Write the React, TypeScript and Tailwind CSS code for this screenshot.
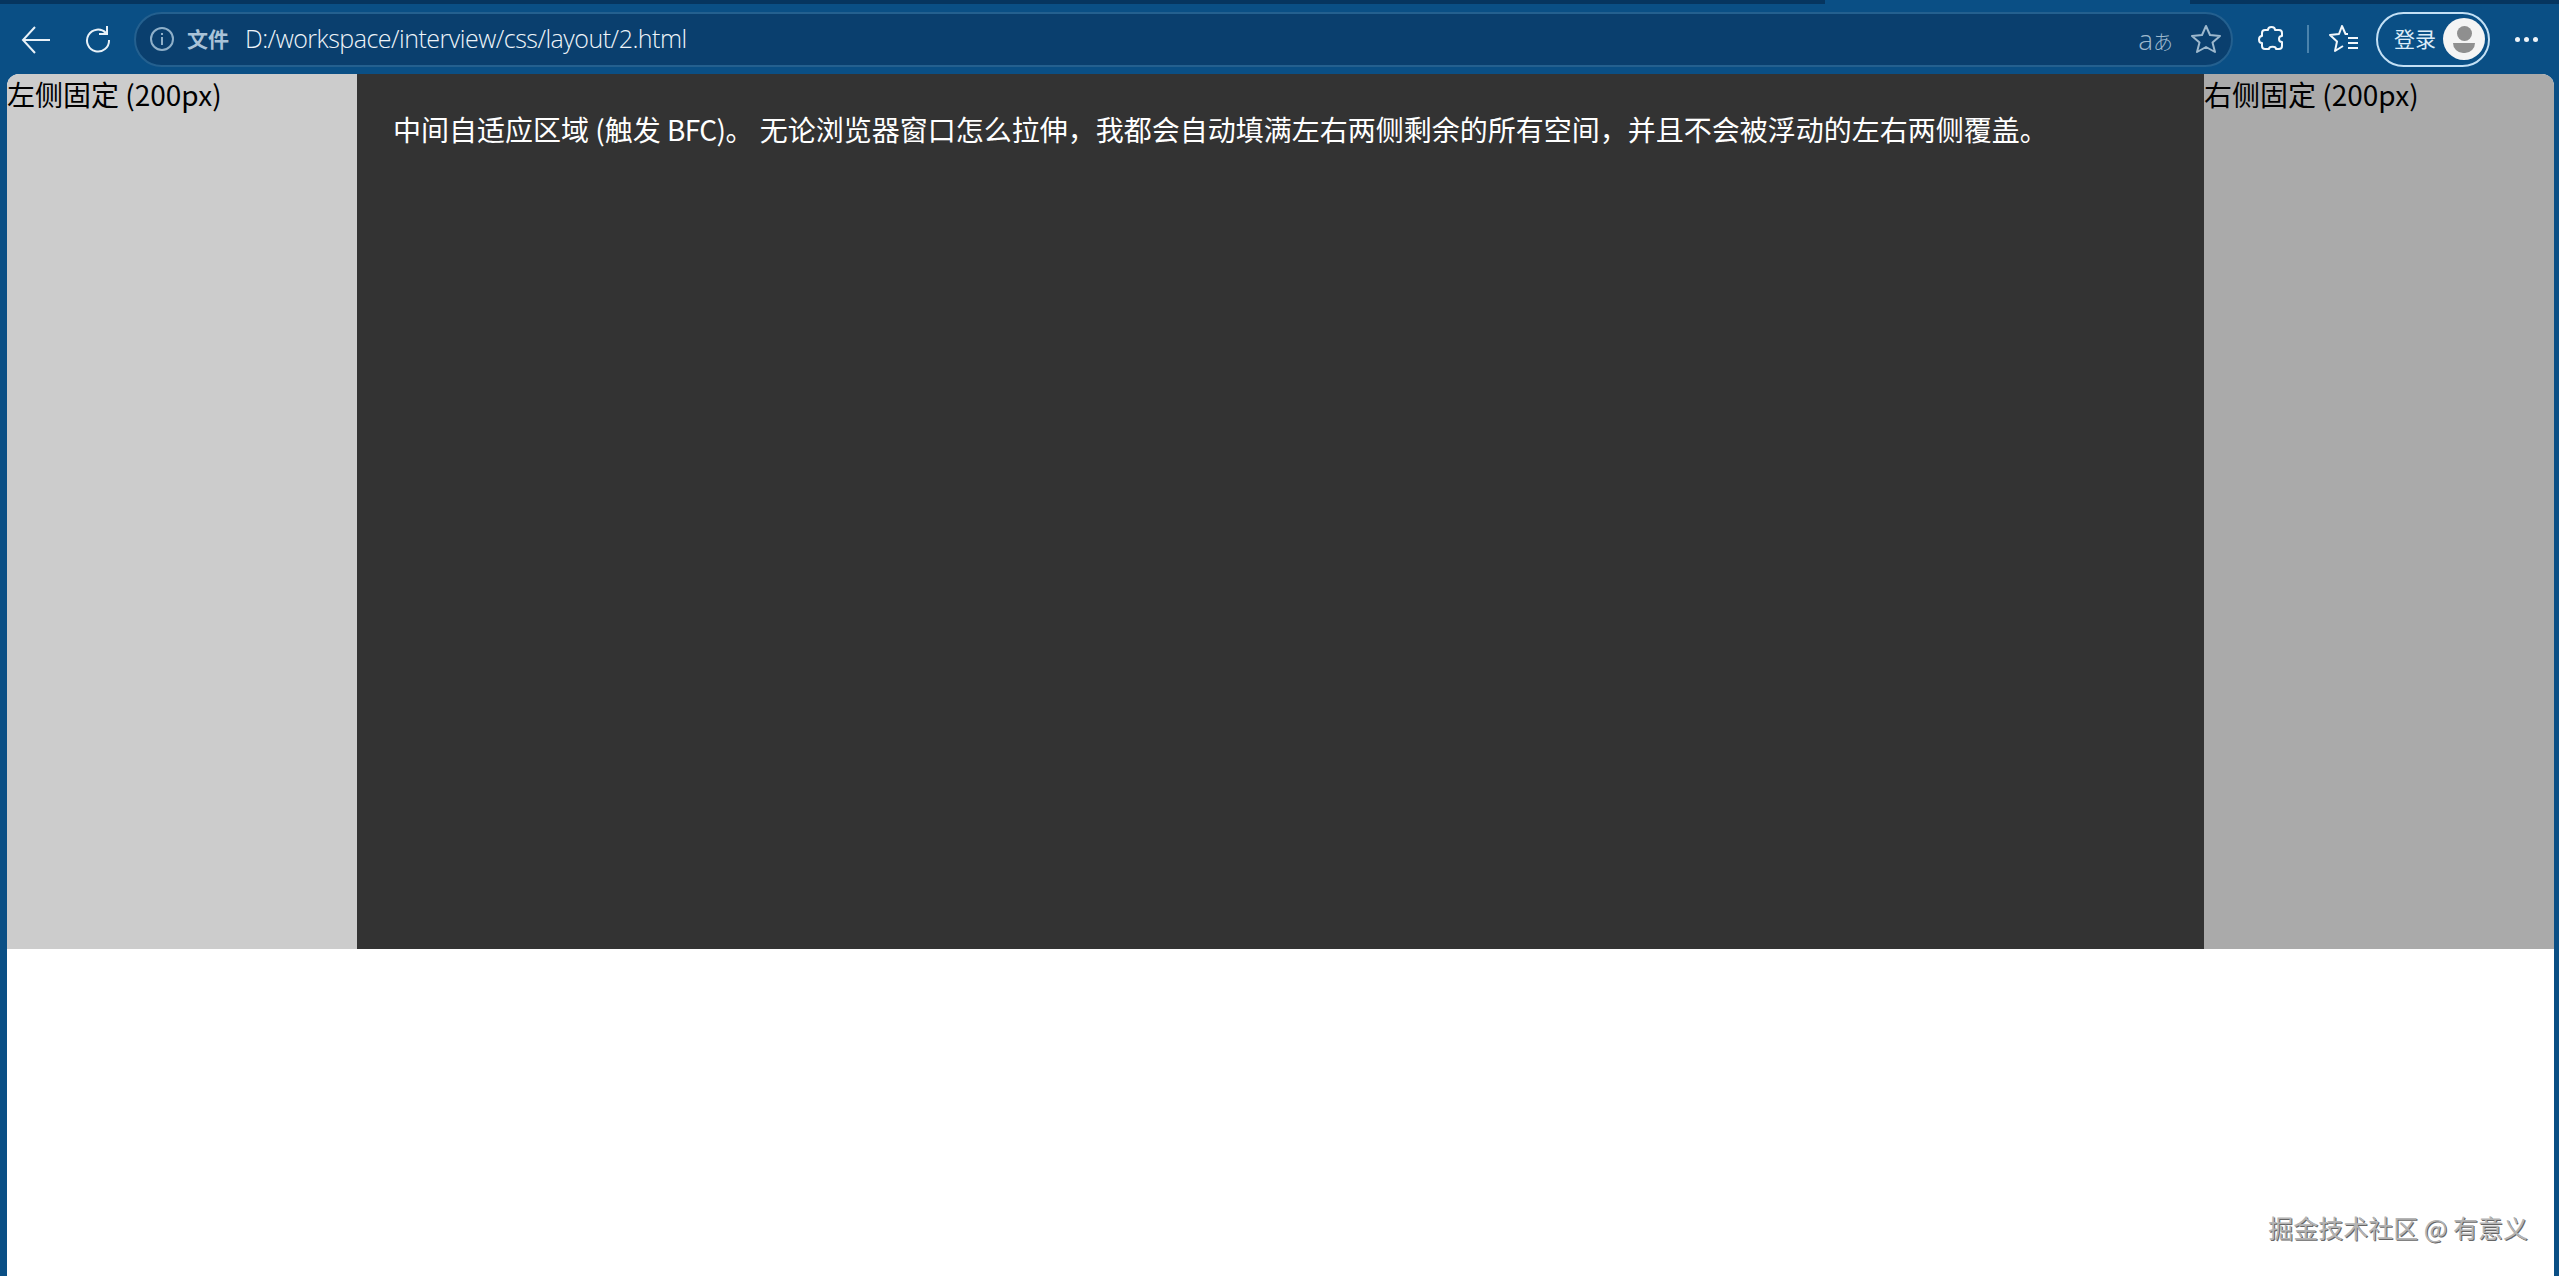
const cjk = { fontFamily: '"Noto Sans CJK SC", "Noto Sans", sans-serif' };

function BrowserBar() {
  return (
    <div className="h-[74px] shrink-0 flex flex-col">
      <div className="h-[4px] bg-[#06355f] flex">
        <div className="w-[1825px] bg-[#06355f]" />
        <div className="w-[365px] bg-[#0a4f85]" />
        <div className="flex-1 bg-[#06355f]" />
      </div>
      <div className="flex-1 flex items-center pl-[20px] pr-[16px]">
        {/* back */}
        <svg width="32" height="32" viewBox="0 0 32 32" fill="none" stroke="#e8f1f8" strokeWidth="2">
          <path d="M30 17H3M15 4 3 17l12 13" />
        </svg>
        {/* refresh */}
        <svg className="ml-[31px]" width="28" height="28" viewBox="0 0 28 28" fill="none" stroke="#e8f1f8" strokeWidth="2">
          <path d="M23 8a11 11 0 1 0 3 7" />
          <path d="M24 1v8h-8" />
        </svg>

        {/* address field */}
        <div className="ml-[23px] w-[2099px] h-[55px] rounded-full bg-[#0a3f6e] border-2 border-[#24608f] flex items-center pl-[13px] pr-[10px]">
          <svg width="26" height="26" viewBox="0 0 26 26" fill="none" stroke="#8fb0c9" strokeWidth="2">
            <circle cx="13" cy="13" r="11" />
            <path d="M13 11v8M13 7v2" />
          </svg>
          <span className="ml-[12px] text-[21px] font-bold text-[#a9c3d8]" style={cjk}>文件</span>
          <span className="ml-[16px] text-[25px] tracking-[-0.5px] font-light text-[#eef4f9] font-['Open_Sans',sans-serif]">D:/workspace/interview/css/layout/2.html</span>
          <div className="ml-auto flex items-center gap-[18px]">
            <span className="text-[28px] leading-none font-light text-[#9db8cd] flex items-baseline font-['Open_Sans',sans-serif]">
              a<span className="text-[20px]" style={cjk}>あ</span>
            </span>
            <svg width="30" height="30" viewBox="0 0 30 30" fill="none" stroke="#9db8cd" strokeWidth="2" strokeLinejoin="round">
              <path d="m15 2 4 9 10 1-7.500 6.500L24 28l-9-5-9 5 2.500-9.500L1 12l10-1z" />
            </svg>
          </div>
        </div>

        {/* extensions */}
        <svg className="ml-[25px]" width="28" height="28" viewBox="0 0 28 28" fill="none" stroke="#f2f7fb" strokeWidth="2" strokeLinejoin="round">
          <path d="M10 5c0-4 7-4 7 0h4c2 0 3 1 3 3v3c-4 0-4 6 0 6v4c0 2-1 3-3 3h-3c0-3-7-3-7 0H7c-2 0-3-1-3-3v-3c-4 0-4-7 0-7V8c0-2 1-3 3-3z" />
        </svg>
        <div className="ml-[21px] w-[2px] h-[28px] bg-[#4a83ad]" />
        {/* favorites */}
        <svg className="ml-[20px]" width="30" height="30" viewBox="0 0 30 30" fill="none" stroke="#f2f7fb" strokeWidth="2" strokeLinejoin="round">
          <path d="M19 10h-2.500L13 2l-3 8-9 1 7 6.500L6 27l8-5" />
          <path d="M19 14h10M19 19h10M19 24h10" />
        </svg>
        {/* profile */}
        <div className="ml-[17px] w-[114px] h-[55px] rounded-full border-2 border-[#c3e0f5] flex items-center justify-between pl-[16px] pr-[3px]">
          <span className="text-[21px] text-[#dcecf8]" style={cjk}>登录</span>
          <div className="w-[42px] h-[42px] rounded-full bg-[#f4f4f4] flex flex-col items-center justify-center gap-[2px]">
            <div className="w-[15px] h-[15px] rounded-full bg-[#8f8f8f]" />
            <div className="w-[22px] h-[10px] rounded-b-full rounded-t-[4px] bg-[#8f8f8f]" />
          </div>
        </div>
        {/* more */}
        <div className="ml-[25px] flex gap-[4px]">
          <div className="w-[5px] h-[5px] rounded-full bg-[#eef4f9]" />
          <div className="w-[5px] h-[5px] rounded-full bg-[#eef4f9]" />
          <div className="w-[5px] h-[5px] rounded-full bg-[#eef4f9]" />
        </div>
      </div>
    </div>
  );
}

export default function App() {
  return (
    <div className="h-[1276px] w-full flex flex-col bg-[#0a4f85] overflow-hidden" style={cjk}>
      <BrowserBar />
      <div className="relative flex-1 ml-[7px] mr-[5px] bg-white rounded-t-[12px] overflow-hidden">
        <div className="h-[875px] flex text-[28px] leading-[40px]">
          <div className="w-[350px] shrink-0 bg-[#cccccc] text-black">左侧固定 (200px)</div>
          <div className="flex-1 bg-[#333333] text-white pl-[36px] pt-[35px]">
            中间自适应区域 (触发 <span className="tracking-[-0.6px]">BFC)</span>。 无论浏览器窗口怎么拉伸，我都会自动填满左右两侧剩余的所有空间，并且不会被浮动的左右两侧覆盖。
          </div>
          <div className="w-[350px] shrink-0 bg-[#aaaaaa] text-black">右侧固定 (200px)</div>
        </div>
        <div className="absolute right-[26px] bottom-[33px] text-[25px] leading-[32px] text-[#b4b4b4] [text-shadow:1px_1px_0_#666]">
          掘金技术社区 @ 有意义
        </div>
      </div>
    </div>
  );
}
